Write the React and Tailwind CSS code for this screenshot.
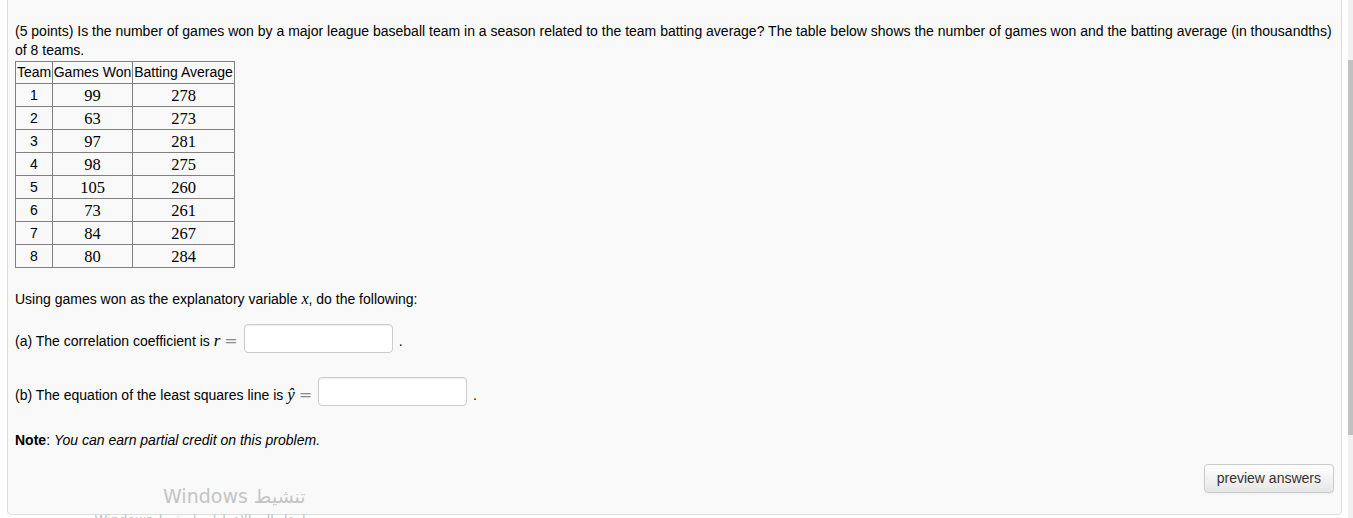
import React from "react";

const rows = [
  [1, 99, 278],
  [2, 63, 273],
  [3, 97, 281],
  [4, 98, 275],
  [5, 105, 260],
  [6, 73, 261],
  [7, 84, 267],
  [8, 80, 284],
];

const mathFont = { fontFamily: '"Liberation Serif", "DejaVu Serif", serif' };
const eqFont = { fontFamily: '"DejaVu Serif", "Liberation Serif", serif' };

const AnswerBox = () => (
  <input
    type="text"
    className="h-[29px] w-[149px] rounded-[4px] border border-[#cccccc] bg-white shadow-[inset_0_1px_1px_rgba(0,0,0,0.075)] outline-none"
  />
);

const Eq = () => (
  <span className="ml-[4px] text-[16px] text-[#8a8a8a]" style={eqFont}>
    =
  </span>
);

export default function App() {
  return (
    <div
      className="relative h-[518px] overflow-hidden bg-white text-[14px] leading-[19px] text-black"
      style={{ fontFamily: '"Liberation Sans", Arial, sans-serif' }}
    >
      <div className="ml-[7px] mt-[-30px] w-[1335px] rounded-[4px] border border-[#dddddd] bg-[#f9f9f9] px-[7px] pb-[21px] pt-[14px]">
        <h3 className="text-[16px] font-bold leading-[20px]">Problem 10.</h3>

        <p className="mt-[17px]">
          (5 points) Is the number of games won by a major league baseball team in a season related to the team
          batting average? The table below shows the number of games won and the batting average (in thousandths) of
          8 teams.
        </p>

        <table className="mt-[1px] border-collapse">
          <thead>
            <tr className="h-[22px]">
              <th className="w-[37px] border border-[#808080] px-0 text-center font-normal">Team</th>
              <th className="w-[80px] border border-[#808080] px-0 text-center font-normal">Games Won</th>
              <th className="w-[102px] border border-[#808080] px-0 text-center font-normal">Batting Average</th>
            </tr>
          </thead>
          <tbody>
            {rows.map(([t, g, b]) => (
              <tr key={t} className="h-[23px]">
                <td className="border border-[#808080] text-center">{t}</td>
                <td className="border border-[#808080] text-center text-[16.5px]" style={mathFont}>
                  {g}
                </td>
                <td className="border border-[#808080] text-center text-[16.5px]" style={mathFont}>
                  {b}
                </td>
              </tr>
            ))}
          </tbody>
        </table>

        <p className="mt-[21px]">
          Using games won as the explanatory variable{" "}
          <span className="text-[16px] italic" style={mathFont}>
            x
          </span>
          , do the following:
        </p>

        <div className="mt-[15px] flex items-end">
          <span className="pb-[2px]">
            (a) The correlation coefficient is{" "}
            <span className="text-[17px] italic" style={mathFont}>
              r
            </span>
            <Eq />
          </span>
          <span className="ml-[6px]">
            <AnswerBox />
          </span>
          <span className="ml-[6px] pb-[2px]">.</span>
        </div>

        <div className="mt-[24px] flex items-end">
          <span className="pb-[1px]">
            (b) The equation of the least squares line is{" "}
            <span className="text-[17px] italic" style={mathFont}>
              ŷ
            </span>
            <Eq />
          </span>
          <span className="ml-[6px]">
            <AnswerBox />
          </span>
          <span className="ml-[6px] pb-[1px]">.</span>
        </div>

        <p className="mt-[25px]">
          <b>Note</b>: <i>You can earn partial credit on this problem.</i>
        </p>

        <div className="mt-[14px] flex justify-end">
          <button className="h-[29px] rounded-[4px] border border-[#cccccc] bg-gradient-to-b from-white to-[#e6e6e6] px-[12px] text-[14px] text-[#333333] shadow-[0_1px_2px_rgba(0,0,0,0.05)]">
            preview answers
          </button>
        </div>
      </div>

      {/* scrollbar */}
      <div className="absolute right-0 top-0 h-full w-[5px] bg-[#f1f1f1]">
        <div className="mt-[60px] h-[375px] w-full bg-[#c1c1c1]" />
      </div>

      {/* windows activation watermark */}
      <div
        className="pointer-events-none absolute left-[163px] top-[484px] text-[#c4c4c4]"
        style={{ fontFamily: '"DejaVu Sans", "Noto Sans", sans-serif' }}
      >
        <div dir="rtl" className="text-[19px] leading-[24px]">
          تنشيط Windows
        </div>
        <div dir="rtl" className="ml-[-93px] mt-[4px] text-[13px] leading-[16px]">
          انتقل إلى الإعدادات لتنشيط Windows.
        </div>
      </div>
    </div>
  );
}
